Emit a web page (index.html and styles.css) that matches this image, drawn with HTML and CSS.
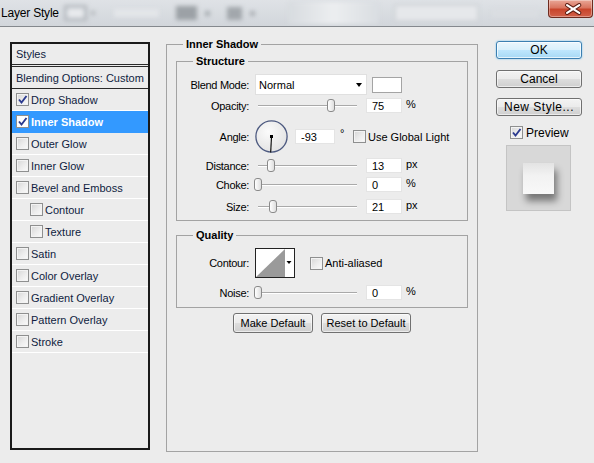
FILE: index.html
```html
<!DOCTYPE html>
<html>
<head>
<meta charset="utf-8">
<link rel="stylesheet" href="styles.css">
</head>
<body>
<div class="titlebar">
  <span class="title">Layer Style</span>
  <div class="blobs">
    <i class="b b1"></i><i class="b b2"></i><i class="b b3"></i><i class="b b4"></i><i class="b b5"></i>
    <i class="b b6"></i><i class="b b7"></i><i class="b b8"></i><i class="b b9"></i><i class="b b10"></i>
  </div>
  <div class="close">
    <svg width="45" height="18" viewBox="0 0 45 18">
      <path d="M19.5 5 L32 13 M32 5 L19.5 13" stroke="#5a1c12" stroke-width="4.2" stroke-linecap="round" fill="none"/>
      <path d="M19.5 5 L32 13 M32 5 L19.5 13" stroke="#ffffff" stroke-width="2.2" stroke-linecap="round" fill="none"/>
    </svg>
  </div>
</div>

<div class="content">
  <div class="list">
    <div class="list-head">Styles</div>
    <div class="list-blend">Blending Options: Custom</div>
    <div class="row"><span class="cb"><svg class="ck" viewBox="0 0 11 11"><path d="M2 5.5 4.5 8.5 9.5 2"/></svg></span>Drop Shadow</div>
    <div class="row sel"><span class="cb on"><svg class="ck" viewBox="0 0 11 11"><path d="M2 5.5 4.5 8.5 9.5 2"/></svg></span>Inner Shadow</div>
    <div class="row"><span class="cb"></span>Outer Glow</div>
    <div class="row"><span class="cb"></span>Inner Glow</div>
    <div class="row"><span class="cb"></span>Bevel and Emboss</div>
    <div class="row sub"><span class="cb"></span>Contour</div>
    <div class="row sub"><span class="cb"></span>Texture</div>
    <div class="row"><span class="cb"></span>Satin</div>
    <div class="row"><span class="cb"></span>Color Overlay</div>
    <div class="row"><span class="cb"></span>Gradient Overlay</div>
    <div class="row"><span class="cb"></span>Pattern Overlay</div>
    <div class="row"><span class="cb"></span>Stroke</div>
  </div>

  <fieldset class="main">
    <legend class="lg-main">Inner Shadow</legend>

    <fieldset class="grp structure">
      <legend class="lg-sub">Structure</legend>
      <div class="frow r-blend">
        <span class="lbl">Blend Mode:</span>
        <div class="dd"><span>Normal</span><span class="arrow"></span></div>
        <div class="sw"></div>
      </div>
      <div class="frow r-op">
        <span class="lbl">Opacity:</span>
        <div class="slider"><span class="thumb" style="left:72px"></span></div>
        <div class="inp">75</div>
        <span class="unit">%</span>
      </div>
      <div class="frow r-angle">
        <span class="lbl">Angle:</span>
        <svg class="dial" width="33" height="33" viewBox="0 0 33 33">
          <defs>
            <radialGradient id="dg" cx="40%" cy="35%" r="70%">
              <stop offset="0" stop-color="#fbfbfb"/>
              <stop offset="1" stop-color="#e2e2e2"/>
            </radialGradient>
          </defs>
          <circle cx="16.5" cy="16.5" r="15.6" fill="url(#dg)" stroke="#4d5a80" stroke-width="1.3"/>
          <line x1="16.5" y1="16.5" x2="15.7" y2="32.5" stroke="#000" stroke-width="1.1"/>
          <rect x="15" y="15" width="3" height="3" fill="#000"/>
        </svg>
        <div class="inp w40">-93</div>
        <span class="deg">°</span>
        <span class="cb ml5"></span>
        <span class="cbl">Use Global Light</span>
      </div>
      <div class="frow r-dist">
        <span class="lbl">Distance:</span>
        <div class="slider"><span class="thumb" style="left:12px"></span></div>
        <div class="inp">13</div>
        <span class="unit">px</span>
      </div>
      <div class="frow r-choke">
        <span class="lbl">Choke:</span>
        <div class="slider"><span class="thumb" style="left:-1px"></span></div>
        <div class="inp">0</div>
        <span class="unit">%</span>
      </div>
      <div class="frow r-size">
        <span class="lbl">Size:</span>
        <div class="slider"><span class="thumb" style="left:14px"></span></div>
        <div class="inp">21</div>
        <span class="unit">px</span>
      </div>
    </fieldset>

    <fieldset class="grp quality">
      <legend class="lg-sub">Quality</legend>
      <div class="frow r-contour">
        <span class="lbl">Contour:</span>
        <svg class="contour" width="40" height="30" viewBox="0 0 40 30">
          <rect x="0.5" y="0.5" width="39" height="29" fill="#fff" stroke="#222"/>
          <polygon points="1,29 30,1 30,29" fill="#9a9a9a"/>
          <polygon points="31.5,13 36.5,13 34,16" fill="#000"/>
        </svg>
        <span class="cb ml15"></span>
        <span class="cbl">Anti-aliased</span>
      </div>
      <div class="frow r-noise">
        <span class="lbl">Noise:</span>
        <div class="slider"><span class="thumb" style="left:-1px"></span></div>
        <div class="inp">0</div>
        <span class="unit">%</span>
      </div>
    </fieldset>

    <div class="defaults">
      <div class="btn w80">Make Default</div>
      <div class="btn w90">Reset to Default</div>
    </div>
  </fieldset>

  <div class="side">
    <div class="sbtn ok">OK</div>
    <div class="sbtn mt11">Cancel</div>
    <div class="sbtn mt10 newst">New Style...</div>
    <div class="prev-row"><span class="cb"><svg class="ck" viewBox="0 0 11 11"><path d="M2 5.5 4.5 8.5 9.5 2"/></svg></span><span class="prev-l">Preview</span></div>
    <div class="prev-box"><div class="prev-sq"></div></div>
  </div>
</div>
</body>
</html>
```

FILE: styles.css
```css
* { box-sizing: border-box; }
html, body { margin: 0; padding: 0; }
body {
  width: 594px;
  height: 463px;
  overflow: hidden;
  background: #ececec;
  font-family: "Liberation Sans", Arial, sans-serif;
  font-size: 11px;
  color: #000;
}

/* title bar */
.titlebar {
  display: flex;
  align-items: flex-start;
  height: 27px;
  border-bottom: 1px solid #84888d;
  background: linear-gradient(#dfe2e6, #d2d6db);
  overflow: hidden;
}
.title {
  flex: none;
  width: 60px;
  padding-left: 1px;
  line-height: 26px;
  font-size: 12px;
  white-space: nowrap;
  letter-spacing: -0.2px;
  color: #000;
}
.blobs {
  display: flex;
  align-items: center;
  height: 26px;
}
.b { display: block; flex: none; height: 16px; filter: blur(2px); }
.b1 { margin-left: 4px; width: 23px; background: #e8eaed; border: 3px solid #b3b8be; }
.b2 { margin-left: 4px; width: 4px; height: 4px; background: #b0b4b9; }
.b3 { margin-left: 19px; width: 45px; height: 8px; background: #e3e6e9; }
.b4 { margin-left: 17px; width: 21px; height: 14px; background: #9ca1a6; }
.b5 { margin-left: 8px; width: 5px; height: 5px; background: #a6abb0; }
.b6 { margin-left: 17px; width: 15px; height: 13px; background: #a2a7ac; }
.b7 { margin-left: 8px; width: 5px; height: 5px; background: #aaaeb3; }
.b8 { margin-left: 33px; width: 91px; height: 22px; background: linear-gradient(90deg, #d7dbdf, #eceef0, #d9dde1); }
.b9 { margin-left: 15px; width: 85px; height: 18px; background: #e6e8eb; border: 2px solid #cfd3d7; }
.b10 { margin-left: 13px; width: 46px; height: 8px; background: #dadde1; }
.close {
  flex: none;
  margin-left: auto;
  margin-right: 1px;
  width: 45px;
  height: 18px;
  border: 1px solid #6e2b1f;
  border-top: none;
  border-radius: 0 0 4px 4px;
  background: linear-gradient(#e9a797 0%, #d97560 45%, #c8452c 55%, #d2604a 100%);
  box-shadow: inset 0 0 0 1px rgba(255, 255, 255, 0.35);
  display: flex;
}
.close svg { margin-left: -1px; }

/* content */
.content {
  display: flex;
  align-items: flex-start;
  padding: 11px 0 0 10px;
}

/* styles list */
.list {
  width: 140px;
  height: 408px;
  margin-top: 4px;
  border: 2px solid #1a1a1a;
  background: #ececec;
  color: #0f1c3f;
}
.list-head {
  height: 21px;
  border-bottom: 1px solid #2a2a2a;
  padding-left: 4px;
  display: flex;
  align-items: center;
}
.list-blend {
  margin-top: 1px;
  height: 23px;
  border-top: 1px solid #2a2a2a;
  border-bottom: 1px solid #2a2a2a;
  padding-left: 4px;
  display: flex;
  align-items: center;
}
.row {
  height: 22px;
  border-bottom: 1px solid #fff;
  display: flex;
  align-items: center;
  padding-left: 4px;
}
.row.sub { padding-left: 18px; }
.row.sel {
  background: #3399ff;
  color: #fff;
  font-weight: bold;
  border-bottom-color: #3399ff;
}

/* checkbox */
.cb {
  flex: none;
  width: 13px;
  height: 13px;
  border: 1px solid #8e8f8f;
  background: linear-gradient(135deg, #d6d6d6 0%, #ededed 55%, #fbfbfb 100%);
  box-shadow: inset 0 0 0 1px #f3f3f3;
  margin-right: 2px;
  display: flex;
  align-items: center;
  justify-content: center;
}
.cb.on { background: #fff; box-shadow: none; }
.ck { width: 11px; height: 11px; }
.ck path { fill: none; stroke: #2b3a8f; stroke-width: 1.9; }
.ml5 { margin-left: 5px; }
.ml15 { margin-left: 15px; }
.cbl { color: #000; }

/* main group */
.main {
  margin: 0 0 0 16px;
  width: 312px;
  height: 414px;
  border: 1px solid #a3a3a3;
  padding: 0 9px;
  min-width: 0;
}
.lg-main, .lg-sub {
  font-weight: bold;
  line-height: 13px;
  padding: 0 3px;
  color: #000;
}
.lg-main { margin-left: 7px; }
.lg-sub { margin-left: 16px; }

.grp {
  margin: 4px 0 0;
  border: 1px solid #a3a3a3;
  padding: 6px 0 6px;
  min-width: 0;
}
.quality { margin-top: 8px; padding-bottom: 7px; }

.frow { display: flex; align-items: center; }
.lbl {
  flex: none;
  width: 72px;
  text-align: right;
  margin-right: 6px;
  letter-spacing: -0.3px;
}
.r-blend { height: 21px; }
.r-op { height: 15px; margin-top: 3px; }
.r-angle { height: 33px; margin-top: 7px; }
.r-dist { height: 15px; margin-top: 5px; }
.r-choke { height: 15px; margin-top: 4px; }
.r-size { height: 15px; margin-top: 7px; }
.r-contour { height: 30px; }
.r-noise { height: 15px; margin-top: 7px; }

.dd {
  width: 112px;
  height: 21px;
  background: #fff;
  border: 1px solid #e0e0e0;
  display: flex;
  align-items: center;
  justify-content: space-between;
  padding: 0 4px 0 3px;
}
.arrow {
  width: 0;
  height: 0;
  border-left: 3.5px solid transparent;
  border-right: 3.5px solid transparent;
  border-top: 4px solid #000;
}
.sw {
  margin-left: 5px;
  width: 30px;
  height: 16px;
  background: #fff;
  border: 1px solid #a4a4a4;
}

.slider {
  position: relative;
  flex: none;
  width: 105px;
  height: 15px;
}
.slider::before {
  content: "";
  position: absolute;
  left: 3px;
  right: 3px;
  top: 7px;
  height: 1px;
  background: #a9a9a9;
  box-shadow: 0 1px 0 #fff;
}
.thumb {
  position: absolute;
  top: 1px;
  width: 8px;
  height: 13px;
  border: 1px solid #8a8a8a;
  border-radius: 3px;
  background: linear-gradient(90deg, #ffffff, #dedede);
}

.inp {
  flex: none;
  margin-left: 6px;
  width: 36px;
  height: 15px;
  background: #fff;
  border: 1px solid #e4e4e4;
  padding-left: 5px;
  display: flex;
  align-items: center;
}
.inp.w40 { width: 40px; margin-left: 7px; }
.unit { margin-left: 4px; align-self: flex-start; line-height: 12px; }
.deg { width: 8px; margin-left: 5px; align-self: flex-start; margin-top: 8px; line-height: 10px; }
.dial { flex: none; }
.contour { flex: none; }

.defaults {
  display: flex;
  justify-content: center;
  gap: 8px;
  margin-top: 5px;
}
.btn {
  height: 20px;
  border: 1px solid #707070;
  border-radius: 3px;
  background: linear-gradient(#f3f3f3 0%, #ebebeb 48%, #dddddd 52%, #cfcfcf 100%);
  box-shadow: inset 0 0 0 1px rgba(255, 255, 255, 0.6);
  display: flex;
  align-items: center;
  justify-content: center;
}
.w80 { width: 80px; }
.w90 { width: 90px; }

/* side */
.side {
  margin: 3px 0 0 18px;
  width: 86px;
  display: flex;
  flex-direction: column;
  font-size: 12px;
}
.sbtn {
  height: 18px;
  border: 1px solid #707070;
  border-radius: 3px;
  background: linear-gradient(#f3f3f3 0%, #ebebeb 48%, #dddddd 52%, #cfcfcf 100%);
  box-shadow: inset 0 0 0 1px rgba(255, 255, 255, 0.6);
  display: flex;
  align-items: center;
  justify-content: center;
}
.ok {
  border-color: #3c7fb1;
  background: linear-gradient(#eaf6fd 0%, #d9f0fc 48%, #bee6fd 52%, #a7d9f5 100%);
  box-shadow: 0 0 2px #6ec3f3, inset 0 0 0 1px rgba(255, 255, 255, 0.7);
}
.mt11 { margin-top: 11px; }
.mt10 { margin-top: 10px; }
.newst { letter-spacing: 0.5px; }
.prev-row {
  margin-top: 10px;
  padding-left: 14px;
  height: 13px;
  display: flex;
  align-items: center;
}
.prev-l { margin-left: 1px; }
.prev-box {
  margin: 6px 0 0 10px;
  width: 65px;
  height: 66px;
  background: #d8d8d8;
  border: 1px solid #c4c4c4;
  padding: 17px 0 0 16px;
}
.prev-sq {
  width: 31px;
  height: 31px;
  background: linear-gradient(#e3e3e3, #f2f2f2 40%, #f8f8f8);
  box-shadow: 3px 7px 7px rgba(0, 0, 0, 0.45);
}
```
